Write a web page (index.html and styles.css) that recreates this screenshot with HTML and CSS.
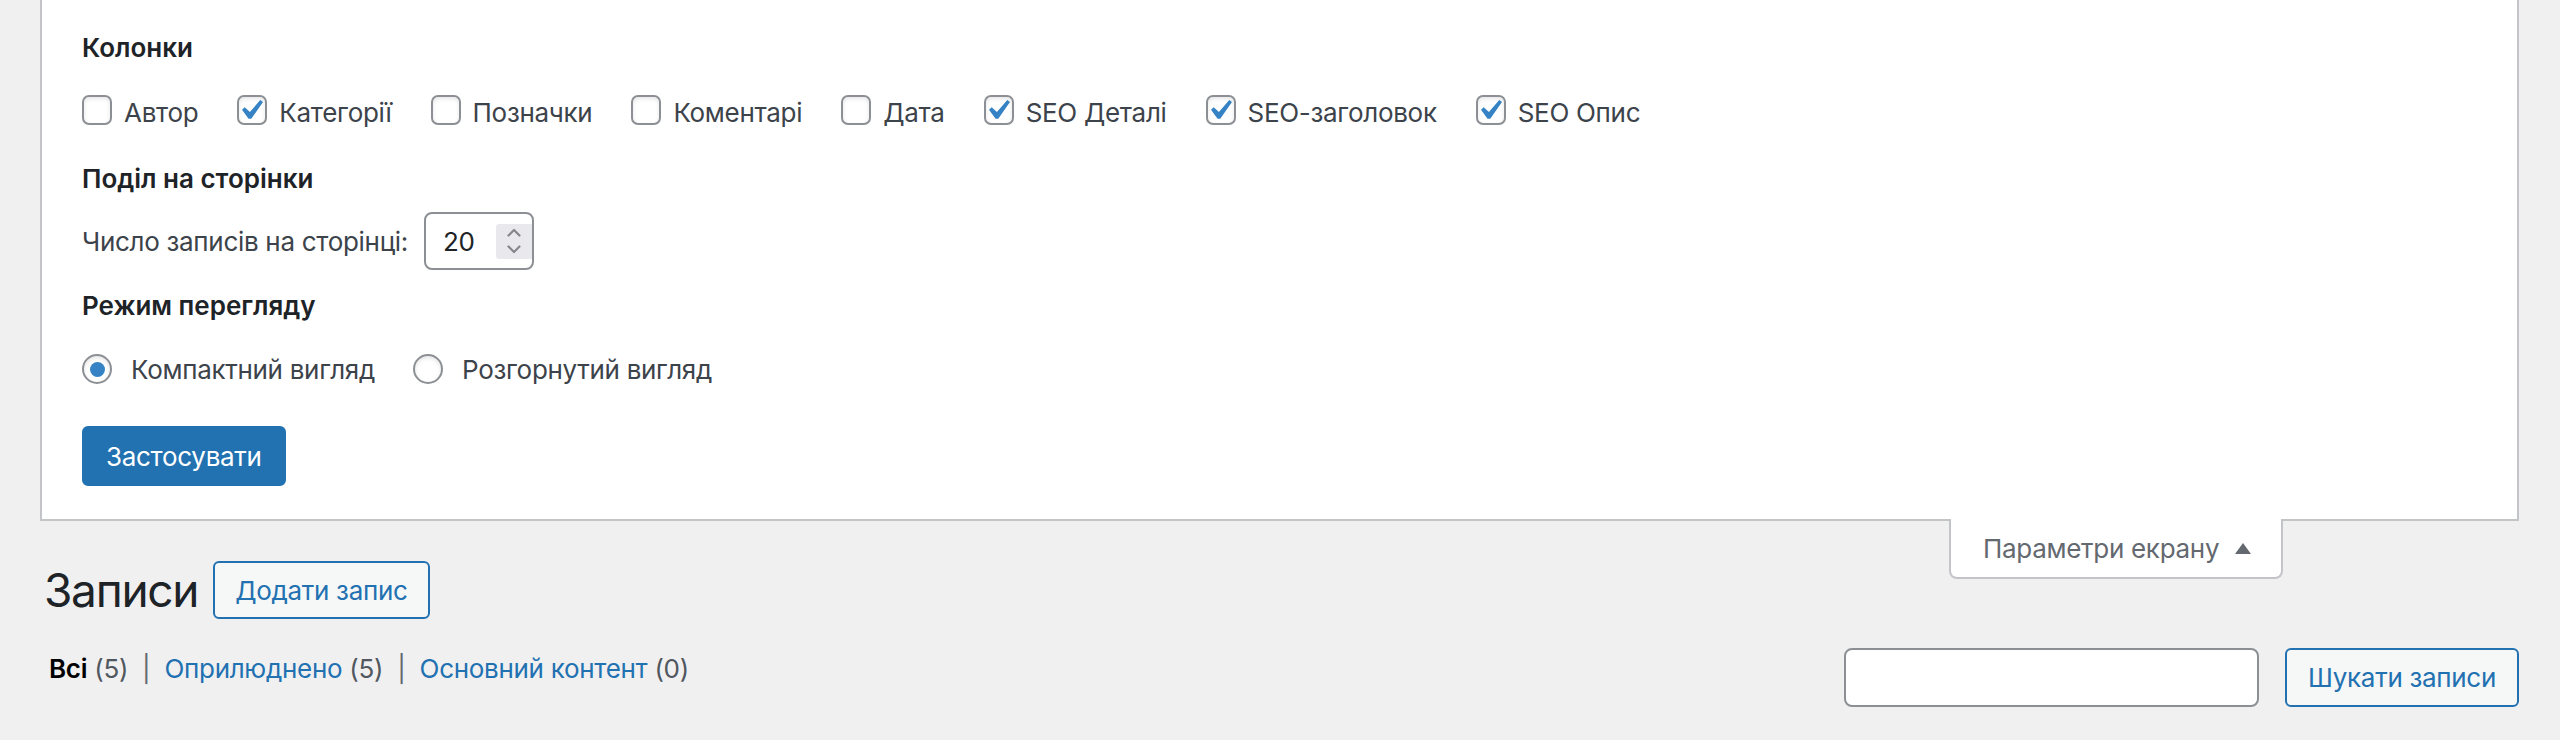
FILE: index.html
```html
<!DOCTYPE html>
<html lang="uk">
<head>
<meta charset="utf-8">
<title>Записи</title>
<link rel="stylesheet" href="styles.css">
</head>
<body>
<div class="screen-meta">
  <form class="screen-options">
    <div class="legend">Колонки</div>
    <div class="prefs-row">
      <label class="pref"><span class="cb"></span>Автор</label>
      <label class="pref"><span class="cb"><svg viewBox="3.3 2.4 14.85 14.85" width="30" height="30"><path d="M14.83 4.89l1.34.94-5.81 8.38H9.02L5.78 9.67l1.34-1.25 2.57 2.4z" fill="#3582c4"/></svg></span>Категорії</label>
      <label class="pref"><span class="cb"></span>Позначки</label>
      <label class="pref"><span class="cb"></span>Коментарі</label>
      <label class="pref"><span class="cb"></span>Дата</label>
      <label class="pref"><span class="cb"><svg viewBox="3.3 2.4 14.85 14.85" width="30" height="30"><path d="M14.83 4.89l1.34.94-5.81 8.38H9.02L5.78 9.67l1.34-1.25 2.57 2.4z" fill="#3582c4"/></svg></span>SEO Деталі</label>
      <label class="pref"><span class="cb"><svg viewBox="3.3 2.4 14.85 14.85" width="30" height="30"><path d="M14.83 4.89l1.34.94-5.81 8.38H9.02L5.78 9.67l1.34-1.25 2.57 2.4z" fill="#3582c4"/></svg></span>SEO-заголовок</label>
      <label class="pref"><span class="cb"><svg viewBox="3.3 2.4 14.85 14.85" width="30" height="30"><path d="M14.83 4.89l1.34.94-5.81 8.38H9.02L5.78 9.67l1.34-1.25 2.57 2.4z" fill="#3582c4"/></svg></span>SEO Опис</label>
    </div>
    <div class="legend legend-2">Поділ на сторінки</div>
    <div class="per-page">
      <span class="per-page-label">Число записів на сторінці:</span>
      <span class="numbox">
        <span class="num">20</span>
        <span class="spin"><svg viewBox="0 0 16 28" width="16" height="28"><path d="M2.5 8.5l5.5-5.5 5.5 5.5M2.5 19.5l5.5 5.5 5.5-5.5" fill="none" stroke="#86868c" stroke-width="2.2" stroke-linecap="round" stroke-linejoin="round"/></svg></span>
      </span>
    </div>
    <div class="legend legend-3">Режим перегляду</div>
    <div class="prefs-row radio-row">
      <label class="pref"><span class="radio on"></span>Компактний вигляд</label>
      <label class="pref"><span class="radio"></span>Розгорнутий вигляд</label>
    </div>
    <button type="button" class="btn-primary">Застосувати</button>
  </form>
</div>
<div class="meta-links">
  <button type="button" class="show-settings">Параметри екрану<svg class="tri" viewBox="0 0 16 11" width="16" height="11"><path d="M8 0L16 11H0z" fill="#646970"/></svg></button>
</div>
<div class="wrap">
  <div class="title-row">
    <h1 class="page-title">Записи</h1>
    <a class="page-title-action" href="#">Додати запис</a>
  </div>
  <div class="list-row">
    <ul class="subsubsub">
      <li><span class="current">Всі</span> <span class="count">(5)</span></li>
      <li class="sep">|</li>
      <li><a href="#">Оприлюднено</a> <span class="count">(5)</span></li>
      <li class="sep">|</li>
      <li><a href="#">Основний контент</a> <span class="count">(0)</span></li>
    </ul>
    <div class="search-box">
      <input type="search" class="search-input" aria-label="Шукати записи">
      <button type="button" class="btn-secondary">Шукати записи</button>
    </div>
  </div>
</div>
</body>
</html>
```

FILE: styles.css
```css
* { box-sizing: border-box; }

html, body {
  margin: 0;
  padding: 0;
}

body {
  background: #f0f0f1;
  font-family: Inter, "Noto Sans", sans-serif;
  font-size: 26px;
  letter-spacing: -0.3px;
  color: #3c434a;
  height: 740px;
  overflow: hidden;
}

/* ---------- screen options panel ---------- */
.screen-meta {
  margin: 0 41px 0 40px;
  background: #fff;
  border: 2px solid #c3c4c7;
  border-top: none;
  padding: 28px 40px 33px 40px;
}

.screen-options {
  display: flex;
  flex-direction: column;
  align-items: flex-start;
}

.legend {
  font-weight: 600;
  color: #1d2327;
  height: 40px;
  line-height: 40px;
  letter-spacing: 0;
}

.prefs-row {
  display: flex;
  align-items: center;
  height: 48px;
  margin-top: 20px;
}

.pref {
  display: flex;
  align-items: center;
  margin-right: 39px;
  color: #3c434a;
  white-space: nowrap;
}

.cb {
  width: 30px;
  height: 30px;
  border: 2px solid #8c8f94;
  border-radius: 7px;
  background: #fff;
  box-shadow: inset 0 2px 4px rgba(0, 0, 0, .1);
  margin-right: 12px;
  margin-top: -4px;
  display: flex;
  align-items: center;
  justify-content: center;
  overflow: visible;
}

.cb svg {
  display: block;
  flex: none;
  margin: -2px;
}

.legend-2 { margin-top: 23px; }

.per-page {
  display: flex;
  align-items: center;
  margin-top: 13px;
  height: 58px;
}

.per-page-label {
  margin-right: 16px;
}

.numbox {
  width: 110px;
  height: 58px;
  border: 2px solid #8c8f94;
  border-radius: 8px;
  background: #fff;
  display: flex;
  align-items: center;
  justify-content: space-between;
  padding: 0 0 0 17px;
  color: #1d2327;
}

.spin {
  width: 36px;
  height: 35px;
  background: #e9e9ed;
  border-radius: 3px 0 0 3px;
  display: flex;
  align-items: center;
  justify-content: center;
}

.spin svg { display: block; }

.legend-3 { margin-top: 16px; }

.radio-row { margin-top: 19px; }

.radio-row .pref { margin-right: 38px; }

.radio {
  width: 30px;
  height: 30px;
  border: 2px solid #8c8f94;
  border-radius: 50%;
  background: #fff;
  box-shadow: inset 0 2px 4px rgba(0, 0, 0, .1);
  margin-right: 19px;
  display: flex;
  align-items: center;
  justify-content: center;
}

.radio.on::before {
  content: "";
  width: 15px;
  height: 15px;
  border-radius: 50%;
  background: #3582c4;
}

.btn-primary {
  margin-top: 33px;
  height: 60px;
  padding: 0 22px;
  background: #2271b1;
  border: 2px solid #2271b1;
  border-radius: 6px;
  color: #fff;
  font-family: inherit;
  font-size: 26px;
  letter-spacing: inherit;
  cursor: pointer;
}

/* ---------- screen options tab ---------- */
.meta-links {
  float: right;
  margin: -2px 277px 0 0;
}

.show-settings {
  display: flex;
  align-items: center;
  width: 334px;
  height: 60px;
  padding: 0 0 0 32px;
  background: #fff;
  border: 2px solid #c3c4c7;
  border-top: none;
  border-radius: 0 0 8px 8px;
  color: #646970;
  font-family: inherit;
  font-size: 26px;
  letter-spacing: inherit;
}

.show-settings .tri {
  margin-left: 16px;
  display: block;
}

/* ---------- page body ---------- */
.wrap {
  margin: 0 41px 0 44px;
}

.title-row {
  display: flex;
  align-items: center;
  padding-top: 40px;
  height: 98px;
}

.page-title {
  margin: 0 15px 0 0;
  font-size: 46px;
  font-weight: 400;
  letter-spacing: -1.3px;
  color: #1d2327;
  line-height: 58px;
}

.page-title-action {
  display: flex;
  align-items: center;
  height: 58px;
  padding: 0 20px;
  border: 2px solid #2271b1;
  border-radius: 6px;
  background: #f6f7f7;
  color: #2271b1;
  text-decoration: none;
}

.list-row {
  display: flex;
  justify-content: space-between;
  align-items: flex-start;
  margin-top: 29px;
}

.subsubsub {
  list-style: none;
  margin: 0;
  padding: 0 0 0 5px;
  display: flex;
  line-height: 41px;
  color: #646970;
}

.subsubsub li { white-space: pre; }

.subsubsub .sep { margin: 0 14px; color: #646970; }

.subsubsub a {
  color: #2271b1;
  text-decoration: none;
}

.subsubsub .current {
  color: #000;
  font-weight: 600;
}

.subsubsub .count { color: #50575e; }

.search-box {
  display: flex;
  gap: 26px;
}

.search-input {
  width: 415px;
  height: 59px;
  border: 2px solid #8c8f94;
  border-radius: 8px;
  background: #fff;
  font-family: inherit;
  font-size: 26px;
  padding: 0 16px;
}

.btn-secondary {
  height: 59px;
  padding: 0 21px;
  border: 2px solid #2271b1;
  border-radius: 6px;
  background: #f6f7f7;
  color: #2271b1;
  font-family: inherit;
  font-size: 26px;
  letter-spacing: inherit;
  cursor: pointer;
}
```
